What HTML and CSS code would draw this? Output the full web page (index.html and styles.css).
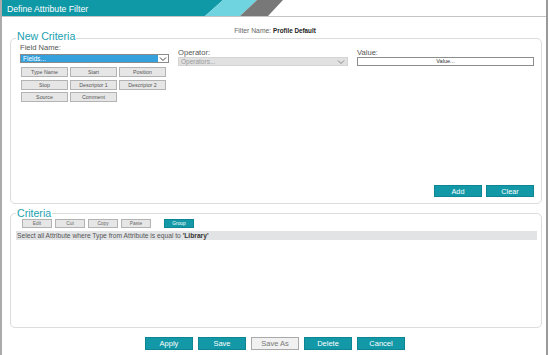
FILE: index.html
```html
<!DOCTYPE html>
<html>
<head>
<meta charset="utf-8">
<link rel="stylesheet" href="styles.css">
</head>
<body>
<div class="dialog">
  <div class="header">
    <svg class="header-art" width="544" height="16" viewBox="0 0 544 16">
      <polygon points="0,0 221,0 203,16 0,16" fill="#0f98a6"/>
      <polygon points="221,0 255,0 238,16 203,16" fill="#6fd4df"/>
      <polygon points="255,0 281,0 266,16 238,16" fill="#787878"/>
    </svg>
    <div class="title">Define Attribute Filter</div>
  </div>
  <div class="filter-name">Filter Name: <span class="fn-value">Profile Default</span></div>

  <div class="group group-new">
    <div class="legend">New Criteria</div>
    <div class="criteria-grid">
      <div class="col col-field">
        <div class="label">Field Name:</div>
        <div class="select select-field">
          <span class="select-text">Fields...</span>
          <span class="chev-box"><svg width="8" height="6" viewBox="0 0 8 6"><polyline points="1,1.5 4,4.5 7,1.5" fill="none" stroke="#444" stroke-width="1"/></svg></span>
        </div>
        <div class="field-buttons">
          <div class="sbtn">Type Name</div>
          <div class="sbtn">Start</div>
          <div class="sbtn">Position</div>
          <div class="sbtn">Stop</div>
          <div class="sbtn">Descriptor 1</div>
          <div class="sbtn">Descriptor 2</div>
          <div class="sbtn">Source</div>
          <div class="sbtn">Comment</div>
        </div>
      </div>
      <div class="col col-op">
        <div class="label label-sm">Operator:</div>
        <div class="select select-op">
          <span class="select-text">Operators...</span>
          <svg class="chev" width="8" height="6" viewBox="0 0 8 6"><polyline points="1,1.5 4,4.5 7,1.5" fill="none" stroke="#888" stroke-width="1"/></svg>
        </div>
      </div>
      <div class="col col-val">
        <div class="label label-sm">Value:</div>
        <div class="value-box">Value...</div>
      </div>
    </div>
    <div class="actions">
      <div class="btn btn-teal btn-small">Add</div>
      <div class="btn btn-teal btn-small">Clear</div>
    </div>
  </div>

  <div class="group group-crit">
    <div class="legend">Criteria</div>
    <div class="crit-tools">
      <div class="tbtn">Edit</div>
      <div class="tbtn">Cut</div>
      <div class="tbtn">Copy</div>
      <div class="tbtn">Paste</div>
      <div class="tbtn tbtn-teal">Group</div>
    </div>
    <div class="crit-row">Select all Attribute where Type from Attribute is equal to <b>'Library'</b></div>
  </div>

  <div class="footer">
    <div class="btn btn-teal">Apply</div>
    <div class="btn btn-teal">Save</div>
    <div class="btn btn-light">Save As</div>
    <div class="btn btn-teal">Delete</div>
    <div class="btn btn-teal">Cancel</div>
  </div>
</div>
</body>
</html>
```

FILE: styles.css
```css
* { box-sizing: border-box; }
html, body { margin: 0; padding: 0; background: #fff; }
body {
  font-family: "Liberation Sans", Arial, sans-serif;
  color: #555;
}
.dialog {
  width: 548px;
  height: 355px;
  border-left: 2px solid #ababab;
  border-right: 2px solid #9a9a9a;
  overflow: hidden;
}
.header {
  display: grid;
  height: 17px;
  border-bottom: 1px solid #c4c4c4;
}
.header-art, .title { grid-area: 1 / 1; }
.header-art { display: block; }
.title {
  color: #fff;
  font-size: 8.7px;
  line-height: 16px;
  padding-top: 1px;
  padding-left: 5px;
}
.filter-name {
  margin-top: 9px;
  text-align: center;
  font-size: 6.8px;
  line-height: 10px;
  color: #666;
  padding-left: 2px;
}
.fn-value { color: #222; font-weight: bold; font-size: 6.3px; }

.group {
  margin: 2px 4px 0 8px;
  border: 1px solid #dcdcdc;
  border-radius: 5px;
}
.legend {
  width: fit-content;
  background: #fff;
  color: #1a9fb0;
  font-size: 10.6px;
  line-height: 12px;
  padding: 0 1px;
}
.group-new {
  height: 166px;
  padding: 0 7px 6px 9px;
  display: flex;
  flex-direction: column;
}
.group-new .legend { margin-top: -9px; margin-left: -4px; }

.criteria-grid {
  display: grid;
  grid-template-columns: 149px 170px 1fr;
  column-gap: 9px;
}
.label {
  font-size: 7.6px;
  line-height: 10px;
  margin-top: 1px;
  color: #555;
}
.label-sm { line-height: 8px; margin-top: 7px; }

.select {
  display: flex;
  align-items: center;
  height: 9px;
  font-size: 6.5px;
}
.select-text { flex: 1; padding-left: 2px; line-height: 9px; }
.select-field {
  margin-top: 1px;
  background: #34a0dc;
  border: 1px solid #8a8a8a;
  color: #fff;
}
.chev-box {
  width: 10px;
  height: 100%;
  background: #fff;
  display: flex;
  align-items: center;
  justify-content: center;
}
.select-op {
  background: #e1e1e1;
  color: #9a9a9a;
  border: 1px solid #d4d4d4;
  padding-right: 2px;
}
.chev { display: block; }
.value-box {
  height: 9px;
  border: 1px solid #8c8c8c;
  font-size: 5.6px;
  line-height: 7px;
  text-align: center;
  color: #333;
}

.field-buttons {
  margin-top: 4px;
  margin-left: 1px;
  display: grid;
  grid-template-columns: repeat(3, 47px);
  column-gap: 2px;
  row-gap: 2.5px;
}
.sbtn {
  height: 10px;
  background: #e6e6e6;
  border: 1px solid #b3b3b3;
  font-size: 5.3px;
  line-height: 8px;
  text-align: center;
  color: #555;
}

.actions {
  margin-top: auto;
  display: flex;
  justify-content: flex-end;
  gap: 4px;
}
.btn {
  width: 48px;
  height: 12px;
  font-size: 7.5px;
  line-height: 11px;
  text-align: center;
}
.btn-small { height: 12px; line-height: 11px; font-size: 7.3px; }
.btn-teal {
  background: #1298a6;
  border: 1px solid #0d8593;
  color: #fff;
}
.btn-light {
  background: #f1f1f1;
  border: 1px solid #a9a9a9;
  color: #777;
}

.group-crit {
  height: 115px;
  margin-top: 9px;
  padding: 0 4px 0 5px;
}
.group-crit .legend { margin-top: -7px; margin-left: 0px; }
.crit-tools {
  display: flex;
  gap: 3px;
  margin-left: 6px;
}
.tbtn {
  width: 30px;
  height: 9px;
  background: #e6e6e6;
  border: 1px solid #b3b3b3;
  font-size: 4.8px;
  line-height: 7px;
  text-align: center;
  color: #666;
}
.tbtn-teal {
  margin-left: 10px;
  background: #1298a6;
  border-color: #0d8593;
  color: #fff;
}
.crit-row {
  margin-top: 3px;
  height: 9px;
  background: #e2e3e5;
  font-size: 6.7px;
  line-height: 9px;
  padding-left: 1px;
  color: #555;
  white-space: nowrap;
}
.crit-row b { color: #333; }

.footer {
  margin-top: 9px;
  display: flex;
  justify-content: center;
  gap: 5px;
  padding-left: 2px;
}
.footer .btn { height: 13px; line-height: 12px; }
```
